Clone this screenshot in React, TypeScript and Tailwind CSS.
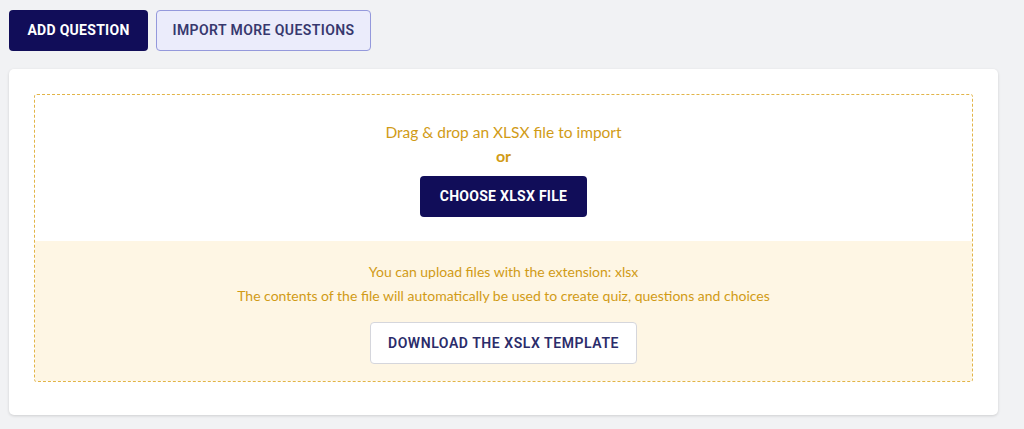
export default function App() {
  return (
    <div className="min-h-screen bg-[#f1f2f4] pt-[10px] px-[9px] font-['Lato','Open_Sans',sans-serif]">
      <div className="flex gap-2">
        <button className="h-[41px] w-[139px] rounded-[4px] bg-[#110d59] text-white text-[14px] font-bold tracking-[0.02em] font-['Roboto',sans-serif]">
          ADD QUESTION
        </button>
        <button className="h-[41px] w-[215px] rounded-[4px] border border-[#9499dc] bg-[#ebecfb] text-[#37386e] text-[14px] font-semibold tracking-[0.03em] font-['Roboto',sans-serif]">
          IMPORT MORE QUESTIONS
        </button>
      </div>

      <div className="mt-[18px] w-[989px] rounded-[5px] bg-white px-[25px] pt-[25px] pb-[33px] shadow-[0_1px_3px_rgba(0,0,0,0.15)]">
        <div className="rounded-[3px] border border-dashed border-[#e2b447] text-[#d19b16] text-center overflow-hidden">
          <div className="h-[146px] pt-[26px] bg-white">
            <p className="text-[15.5px] leading-[23px]">Drag &amp; drop an XLSX file to import</p>
            <p className="text-[16px] leading-[23px] font-bold">or</p>
            <button className="mt-[9px] h-[41px] w-[167px] rounded-[4px] bg-[#110d59] text-white text-[14px] font-bold tracking-[0.02em] font-['Roboto',sans-serif]">
              CHOOSE XLSX FILE
            </button>
          </div>
          <div className="bg-[#fef6e4] pt-[19px] pb-[17px]">
            <p className="text-[14px] leading-[24px]">You can upload files with the extension: xlsx</p>
            <p className="text-[14px] leading-[24px]">
              The contents of the file will automatically be used to create quiz, questions and choices
            </p>
            <button className="mt-[14px] h-[42px] w-[267px] rounded-[4px] border border-[#d5d6dc] bg-white text-[#2b2c6a] text-[14px] font-semibold tracking-[0.04em] font-['Roboto',sans-serif]">
              DOWNLOAD THE XSLX TEMPLATE
            </button>
          </div>
        </div>
      </div>
    </div>
  );
}
